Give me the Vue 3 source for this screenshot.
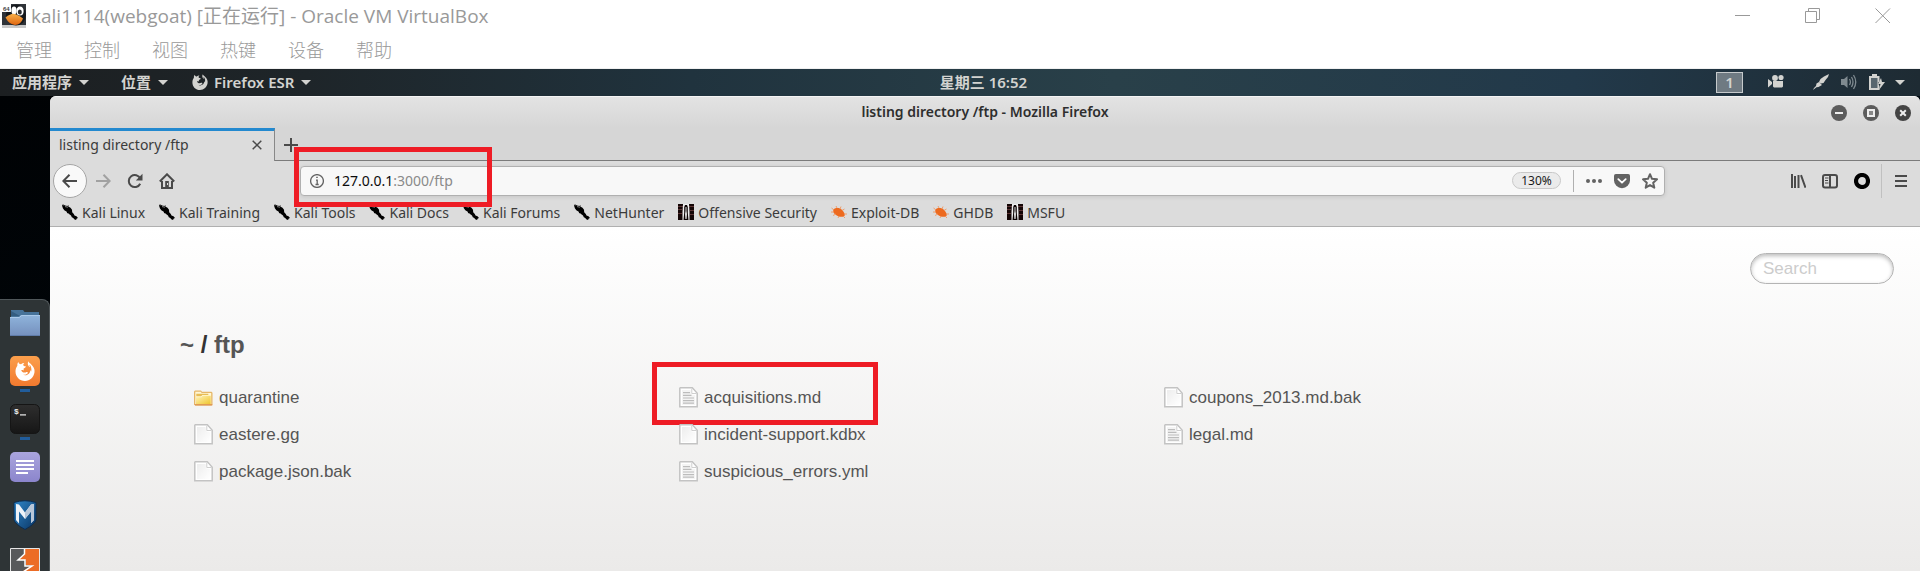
<script setup>
const menus = ['管理', '控制', '视图', '热键', '设备', '帮助']
const bookmarks = [
  { name: 'Kali Linux', icon: 'kali' },
  { name: 'Kali Training', icon: 'kali' },
  { name: 'Kali Tools', icon: 'kali' },
  { name: 'Kali Docs', icon: 'kali' },
  { name: 'Kali Forums', icon: 'kali' },
  { name: 'NetHunter', icon: 'kali' },
  { name: 'Offensive Security', icon: 'offsec' },
  { name: 'Exploit-DB', icon: 'bug' },
  { name: 'GHDB', icon: 'bug' },
  { name: 'MSFU', icon: 'offsec' }
]
const files = [
  { name: 'quarantine', icon: 'dir' },
  { name: 'acquisitions.md', icon: 'text', marked: true },
  { name: 'coupons_2013.md.bak', icon: 'page' },
  { name: 'eastere.gg', icon: 'page' },
  { name: 'incident-support.kdbx', icon: 'page' },
  { name: 'legal.md', icon: 'text' },
  { name: 'package.json.bak', icon: 'page' },
  { name: 'suspicious_errors.yml', icon: 'text' }
]
const dock = [
  { name: 'Files', icon: 'd-files' },
  { name: 'Firefox', icon: 'd-firefox', running: true },
  { name: 'Terminal', icon: 'd-term', running: true },
  { name: 'Text Editor', icon: 'd-notes' },
  { name: 'Metasploit', icon: 'd-msf' },
  { name: 'Burp Suite', icon: 'd-burp' }
]
</script>

<template>
  <div class="screen">
    <svg class="defs" width="0" height="0" aria-hidden="true">
      <defs>
        <linearGradient id="gFolder" x1="0" y1="0" x2="0" y2="1"><stop offset="0" stop-color="#8fb4dc" /><stop offset="1" stop-color="#7590bd" /></linearGradient>
        <linearGradient id="gFox" x1="0" y1="0" x2="0" y2="1"><stop offset="0" stop-color="#fb9f4c" /><stop offset="1" stop-color="#f27a2f" /></linearGradient>
        <linearGradient id="gTerm" x1="0" y1="0" x2="0" y2="1"><stop offset="0" stop-color="#2e2e2e" /><stop offset="1" stop-color="#161616" /></linearGradient>
        <linearGradient id="gNote" x1="0" y1="0" x2="0" y2="1"><stop offset="0" stop-color="#aaa5de" /><stop offset="1" stop-color="#8b85cc" /></linearGradient>
        <linearGradient id="gMsf" x1="0" y1="0" x2="1" y2="1"><stop offset="0" stop-color="#2f86c9" /><stop offset="1" stop-color="#0a3564" /></linearGradient>
        <linearGradient id="gPage" x1="0" y1="0" x2="1" y2="1"><stop offset="0" stop-color="#ededed" /><stop offset="1" stop-color="#ffffff" /></linearGradient>
        <linearGradient id="gDir" x1="0" y1="0" x2="1" y2="1"><stop offset="0" stop-color="#fff3b8" /><stop offset="1" stop-color="#efc52e" /></linearGradient>
        <linearGradient id="gBeak" x1="0" y1="0" x2="0" y2="1"><stop offset="0" stop-color="#f9b04a" /><stop offset="1" stop-color="#e0660f" /></linearGradient>
      </defs>
      <symbol id="kali" viewBox="0 0 16 16">
        <path d="M0 .3 1.500 1.800 1.200.2 3 1.600 5.500 2 6.500.8 6.300 2.600 8.500 3.800 10 5.800 10.200 8.200 11.800 10 12.500 11.500 14.500 12.300 16 14 14.800 14.600 14 16 12.200 15.200 11.300 14 9.800 13.300 9 11.500 7 10 6.200 9.200 5.300 9.300 4.500 7.500 2.600 6.500 1 4.500.3 2.500Z" />
        <path stroke="#dcdcdc" stroke-width=".6" d="M3 2.600 6 3.200" />
      </symbol>
      <symbol id="offsec" viewBox="0 0 16 16">
        <path fill="#140606" d="M0 0h16v16H0z" />
        <path fill="#5c3434" d="M0 2h5v1H0zM0 5h4v1H0zM0 9h4v1H0zM11 2h5v1h-5zM12 6h4v1h-4zM12 10h4v1h-4z" />
        <path fill="#eee" d="M5 0h6l.5 8v8H9.800L9 9V3H7v6l-.8 7H4.500V8z" />
        <path fill="#0c0303" d="M6.200 3 7 1h2l.8 2v6l.7 7H5.500l.7-7z" />
        <path fill="#ddd" d="M7.500 3h1v4l.5 3-.4 5H7.400L7 10l.5-3z" />
      </symbol>
      <symbol id="bug" viewBox="0 0 16 16">
        <path fill="#ed6a1f" d="M2.500 5.500C4.500 3.500 9 3.500 11 6c2 2 3.500 4.500 2.500 6-2 1.500-6 1-8.500-1C2.500 9.200 1.500 7.500 2.500 5.500z" />
        <path fill="none" stroke="#f0955f" stroke-width=".9" d="M3 6 .5 4M3 8H0M5 10l-3 1.500M8 12l-1 2M12 12l2 2M13 10h3M11 6.500l2.500-1.500M9 5l1-2.500M6 4 5 2" />
      </symbol>
      <symbol id="fox" viewBox="0 0 16 16">
        <path d="M2.700.8C3 2 3.700 2.500 4.800 2.600c.8-.8 1.600-1.100 2.700-1.100C6.800 2 6.500 2.600 6.700 3.500c.7.700 1.700.5 2 .9.200.7-1.400 1.200-1.900 1.700.2.500.3 1.200-.2 1.500-.4-.4-1.100-.4-1.600-.2.500 1.400 2 2.200 3.500 1.700.8-.3 1.600-.4 1.900.3-.9 1.500-2.700 2-4.200 1.400 2.700 1.700 6.200-.5 6-3.600.5.500.6 1 .6 1.600.8-2.300.2-4.500-1.200-6-.1.900.1 1.500.5 2.200C10.600 4 9.600 2.500 10.800.2c.3 1.200 1.200 1.500 2.200 2.500C14.800 4.300 16 6.500 15.600 9 15 13 12 16 8 16 3.700 16 .4 12.600.4 8.400.4 6.500 1 5 1.900 3.800 1.800 2.700 2 1.600 2.700.8z" />
      </symbol>
      <symbol id="dir" viewBox="0 0 19 21">
        <path fill="#e6b667" d="M0 4.500 1 3.500h6l1 1.200h9.500l1 1V17.500l-1 1H1.200l-1.200-1z" />
        <path fill="#fff7d6" d="M1.300 4.800h5.400l1 1.200h9.500v11H1.300z" />
        <path fill="#e8bd55" d="M2.300 6.800h12v1.300H8.400L7.200 9.300H2.300z" />
        <path fill="url(#gDir)" d="M2 10.200h5.400l1.300-1.400h8V17H2z" />
        <path fill="#e09a55" d="M.3 17h18v1.600H1.200z" />
      </symbol>
      <symbol id="page" viewBox="0 0 19 21">
        <path fill="#fff" stroke="#c3c3c3" stroke-width="1.500" d="M.8 1.300.8 19.700 18.200 19.700V6.300L13.300.8H1.300z" />
        <path fill="url(#gPage)" d="M3 3h8.500l1 4.500 3.700.8V18H3z" />
        <path fill="#fff" stroke="#cfcfcf" d="M12.800 1.800v4.700h4.400" />
      </symbol>
      <symbol id="text" viewBox="0 0 19 21">
        <path fill="#fff" stroke="#c3c3c3" stroke-width="1.500" d="M.8 1.300.8 19.700 18.200 19.700V6.300L13.300.8H1.300z" />
        <path fill="#f4f4f4" d="M3 3h8.500l1 4.500 3.700.8V18H3z" />
        <path stroke="#bcbcbc" stroke-width="1.200" d="M4 5.700h7M4 8.300h8.500M4 11h11M4 13.600h11M4 16.200h11" />
        <path fill="#fff" stroke="#cfcfcf" d="M12.800 1.800v4.700h4.400" />
      </symbol>
      <symbol id="d-files" viewBox="0 0 30 30">
        <path fill="#47739a" d="M1 2h12l1.500 2H29v6H1z" />
        <path fill="#335c80" d="M1 3l9 5H1z" />
        <path fill="url(#gFolder)" d="M0 9h9l2-2h19v21H0z" />
        <path stroke="#a9c9ea" d="M0 9.500h9.500l2-2H30" fill="none" />
        <path stroke="#5f7ba8" d="M0 27.500h30" />
      </symbol>
      <symbol id="d-firefox" viewBox="0 0 30 30">
        <rect width="30" height="30" rx="5" fill="url(#gFox)" />
        <use href="#fox" x="5" y="5" width="20" height="20" fill="#fff" />
      </symbol>
      <symbol id="d-term" viewBox="0 0 30 30">
        <rect x=".5" y=".5" width="29" height="29" rx="5" fill="url(#gTerm)" stroke="#151515" />
        <text x="4" y="10" class="prompt">$</text>
        <path fill="#eee" d="M10 10.300h6v1.200h-6z" />
      </symbol>
      <symbol id="d-notes" viewBox="0 0 30 30">
        <rect width="30" height="30" rx="5" fill="url(#gNote)" />
        <path stroke="#fff" stroke-width="2" d="M6 9h18M6 13h18M6 17h18M6 21h12" />
      </symbol>
      <symbol id="d-msf" viewBox="0 0 30 30">
        <path fill="url(#gMsf)" stroke="#0c2c50" d="M4 2.500Q15-1 26 2.500V20q-1 4-11 9.500Q5 24 4 20z" />
        <path fill="#eef2f8" d="M6 4l3 .5 6 8 6-8 3-.5v16l-3 3V11.500L15 19 9 11.500v12L6 20z" />
        <path fill="#b8c6d8" d="M15 12.500l6-8 3-.5v16l-3 3V11.500L15 19z" />
      </symbol>
      <symbol id="d-burp" viewBox="0 0 30 30">
        <path fill="#58595b" stroke="#e5e5e5" d="M.5.5h29v29H.5z" />
        <path fill="#ec6c25" d="M15 1h14v28H15l-2-6 9-6h-6v-5H8l7-6z" />
        <path fill="none" stroke="#fff" stroke-width="1.500" d="M14.500 1v5L8 12h7v6h7l-9 6v5" />
      </symbol>
    </svg>

    <header class="host">
      <div class="host-title">
        <svg class="vm-icon" viewBox="0 0 24 24" aria-hidden="true">
          <path fill="#2f3338" d="M0 0h24v24H0z" />
          <path fill="#c9c9c9" d="M0 21h24v3H0z" />
          <ellipse cx="14" cy="11" rx="10" ry="10.500" fill="#15181c" />
          <ellipse cx="12" cy="6.500" rx="2.600" ry="4" fill="#fff" />
          <ellipse cx="18" cy="7" rx="3.600" ry="4.500" fill="#fff" />
          <ellipse cx="17.800" cy="8" rx="2" ry="2.600" fill="#2a2d31" />
          <path fill="url(#gBeak)" d="M3.500 13.500Q9 9 13 10q5 1.500 8 4.500-2 6-8 6.500-6-.5-9.500-7.500z" />
          <path fill="#fff" d="M0 0h9v8H0z" />
          <text x="1" y="7" class="bits">64</text>
        </svg>
        <h1>kali1114(webgoat) [正在运行] - Oracle VM VirtualBox</h1>
        <div class="host-controls">
          <button aria-label="最小化"><svg viewBox="0 0 16 16"><path d="M0 7.500h15" /></svg></button>
          <button aria-label="还原"><svg viewBox="0 0 16 16"><path d="M.5 3.500h11v11H.5zM3.500 3.500v-3h11v11h-3" /></svg></button>
          <button aria-label="关闭"><svg viewBox="0 0 16 16"><path d="M.5.5l14.500 14.500M15 .5.5 15" /></svg></button>
        </div>
      </div>
      <nav class="host-menu">
        <button v-for="m in menus" :key="m">{{ m }}</button>
      </nav>
    </header>

    <div class="panel">
      <nav class="panel-left">
        <button>应用程序<i class="caret"></i></button>
        <button>位置<i class="caret"></i></button>
        <button class="app"><svg class="i16"><use href="#fox" /></svg>Firefox ESR<i class="caret"></i></button>
      </nav>
      <time class="clock">星期三 16:52</time>
      <div class="panel-right">
        <button class="workspace">1</button>
        <svg class="i16 cam" viewBox="0 0 16 16"><circle cx="7" cy="4" r="2.900" /><circle cx="13" cy="3.500" r="2.600" /><path d="M0 5l4 3v2l-4 3.500zM5 7h10v5.500l-1 1H6l-1-1z" /></svg>
        <svg class="i16 plug" viewBox="0 0 16 16"><path d="M16 0l-1 3-2.500 3-2 3L8 9.500 6 8l1.500-3L11 2.500zM9 11l-3.500 2-2 .3L0 16l1-2 2-2 .5-2.500L6 8z" /></svg>
        <svg class="i16 sound" viewBox="0 0 16 16"><path d="M0 5h3l3.500-3v12L3 11H0z" /><path class="wave" d="M8.500 5q1.800 3 0 6M10.500 3q3 5 0 10M12.500 1q4.500 7 0 14" /></svg>
        <svg class="i16 battery" viewBox="0 0 16 16"><path d="M3 0h5v2h2.500v5l-1.500 2 1.500 3v4H0V2h3z" /><path fill="#58666e" d="M2 4h6.500v10H2z" /><path d="M12 4l-3 6h2.500L10 16l6-8h-3z" /></svg>
        <i class="caret"></i>
      </div>
    </div>

    <div class="desktop">
      <nav class="dock">
        <a v-for="d in dock" :key="d.name" href="#" :aria-label="d.name" :class="{ running: d.running }">
          <svg><use :href="'#' + d.icon" /></svg>
        </a>
      </nav>

      <section class="window">
        <div class="titlebar">
          <h2>listing directory /ftp - Mozilla Firefox</h2>
          <div class="win-controls">
            <button aria-label="Minimize"><svg viewBox="0 0 16 16"><circle cx="8" cy="8" r="8" /><path d="M4 8h8" /></svg></button>
            <button aria-label="Maximize"><svg viewBox="0 0 16 16"><circle cx="8" cy="8" r="8" /><path fill="#888" d="M5 5h6v6H5z" /></svg></button>
            <button aria-label="Close"><svg viewBox="0 0 16 16"><circle class="dark" cx="8" cy="8" r="8" /><path d="M5.200 5.200l5.600 5.600M10.800 5.200l-5.600 5.600" /></svg></button>
          </div>
        </div>

        <div class="tabs">
          <div class="tab">
            <span>listing directory /ftp</span>
            <button aria-label="Close tab"><svg viewBox="0 0 10 10"><path d="M.7.700l8.600 8.600M9.300.7.700 9.300" /></svg></button>
          </div>
          <button class="newtab" aria-label="New tab"><svg viewBox="0 0 14 14"><path d="M7 0v14M0 7h14" /></svg></button>
        </div>

        <div class="toolbar">
          <button class="back" aria-label="Back"><svg class="i16" viewBox="0 0 16 16"><path class="ln" d="M15 8H1.500M7.500 1.800 1.300 8l6.200 6.200" /></svg></button>
          <button class="tool dim" aria-label="Forward"><svg class="i16" viewBox="0 0 16 16"><path class="ln" d="M1 8h13.500M8.500 1.800 14.700 8l-6.200 6.200" /></svg></button>
          <button class="tool" aria-label="Reload"><svg class="i16" viewBox="0 0 16 16"><path class="ln" d="M13.200 10.700a6 6 0 1 1 .1-5" /><path class="fl" d="M15.500.8v6.700H8.800z" /></svg></button>
          <button class="tool" aria-label="Home"><svg class="i16" viewBox="0 0 16 16"><path class="ln" d="M.8 8.500 8 1.300l7.200 7.200" /><path class="ln" d="M3 8v7h10V8" /><path class="fl" d="M6.200 8h3.600v7H6.200z" /><path fill="#ddd" d="M8 10h1v2H8z" /></svg></button>

          <div class="urlbox">
            <label class="url" for="address">
              <svg class="info" viewBox="0 0 14 14"><circle cx="7" cy="7" r="6.400" /><path d="M6 6.200h1.200v4.300M5.500 10.500h3.200" /><path d="M6.200 3.300h1.600" /></svg>
              <span class="host-part">127.0.0.1</span><span class="rest">:3000/ftp</span>
            </label>
            <input id="address" type="text" aria-label="Address" />
            <button class="zoom">130%</button>
            <i class="vsep"></i>
            <svg class="i16" viewBox="0 0 16 16"><circle cx="2" cy="8" r="2" /><circle cx="8" cy="8" r="2" /><circle cx="14" cy="8" r="2" /></svg>
            <svg class="i16" viewBox="0 0 16 16"><path d="M1.800 1h12.400Q16 1 16 2.800v4.400a8 8 0 0 1-16 0V2.800Q0 1 1.800 1z" /><path fill="none" stroke="#fff" stroke-width="1.800" stroke-linecap="round" stroke-linejoin="round" d="M4.300 6.200 8 9.700l3.700-3.500" /></svg>
            <svg class="i16" viewBox="0 0 16 16"><path class="ln" stroke-linejoin="round" d="M8 1.200l2 4.600 5 .5-3.800 3.400 1.100 5L8 12.100l-4.300 2.600 1.100-5L1 6.300l5-.5z" /></svg>
          </div>

          <div class="tool-right">
            <svg class="i16" viewBox="0 0 16 16"><path class="ln" d="M2 1v14M5 3v12M8.500 2v13M11 2.200l4.500 12.500" /></svg>
            <svg class="i16" viewBox="0 0 16 16"><rect class="ln" x="1" y="2" width="14" height="12.500" rx="2" /><path class="ln" d="M8 2v12.500" /><path stroke="#4a4a4a" d="M3 5h3.500M3 7.500h3M3 10h3.500" /></svg>
            <svg class="i16" viewBox="0 0 16 16"><circle cx="8" cy="8" r="6" fill="none" stroke="#000" stroke-width="4.200" /></svg>
            <button class="burger" aria-label="Menu"><svg viewBox="0 0 12 12"><path class="ln" d="M0 1h12M0 6h12M0 11h12" /></svg></button>
          </div>
        </div>

        <nav class="bookmarks">
          <a v-for="b in bookmarks" :key="b.name" href="#"><svg class="i16"><use :href="'#' + b.icon" /></svg>{{ b.name }}</a>
        </nav>

        <main class="page">
          <input class="search" type="text" placeholder="Search" aria-label="Search" />
          <h3><a href="#">~</a> / <a href="#">ftp</a></h3>
          <ul class="files">
            <li v-for="f in files" :key="f.name">
              <a href="#"><svg><use :href="'#' + f.icon" /></svg>{{ f.name }}</a>
              <i v-if="f.marked" class="mark"></i>
            </li>
          </ul>
        </main>
        <i class="mark mark-url"></i>
      </section>
    </div>
  </div>
</template>

<style>
body {
  margin: 0;
  overflow: hidden;
}
</style>

<style scoped>
* {
  box-sizing: border-box;
}
button {
  border: 0;
  padding: 0;
  background: none;
  font: inherit;
  color: inherit;
}
a {
  color: inherit;
  text-decoration: none;
}
svg {
  display: block;
  flex: none;
}
h1, h2, h3, ul {
  margin: 0;
  padding: 0;
  font-size: inherit;
}
.defs {
  position: absolute;
}
.screen {
  display: flex;
  flex-direction: column;
  height: 100vh;
  overflow: hidden;
  background: #fff;
  font-family: "Noto Sans", "Noto Sans CJK SC", sans-serif;
}
.i16 {
  width: 16px;
  height: 16px;
}

.host {
  color: #999;
  border-bottom: 1px solid #f0f0f0;
}
.host-title {
  display: flex;
  align-items: center;
  height: 32px;
  padding: 0 29px 0 2px;
}
.vm-icon {
  width: 24px;
  height: 24px;
  overflow: visible;
}
.bits {
  font: bold 6px "Liberation Sans", sans-serif;
  fill: #444;
}
.host-title h1 {
  flex: 1;
  margin-left: 5px;
  font: 400 19px/30px "Open Sans", "Noto Sans CJK SC", sans-serif;
}
.host-controls {
  display: flex;
  gap: 54px;
}
.host-controls svg {
  width: 16px;
  height: 16px;
  fill: none;
  stroke: #999;
}
.host-menu {
  display: flex;
  gap: 32px;
  height: 36px;
  padding: 0 0 2px 16px;
  font: 300 18px "Noto Sans CJK SC", sans-serif;
}

.panel {
  display: grid;
  grid-template-columns: 1fr auto 1fr;
  align-items: center;
  flex: none;
  height: 27px;
  padding: 0 15px 1px 12px;
  background: linear-gradient(90deg, #1c1f21 0, #1e2529 16%, #20333e 36%, #294049 58%, #22394a 82%, #1e2b33 100%);
  color: #d3d3d0;
  fill: #d3d3d0;
  font-size: 15px;
  font-weight: 600;
  line-height: 24px;
}
.panel-left, .panel-right, .panel-left button {
  display: flex;
  align-items: center;
}
.panel-left {
  gap: 32px;
}
.panel-left .app {
  margin-left: -8px;
}
.app .i16 {
  margin-right: 6px;
}
.caret {
  width: 0;
  margin-left: 7px;
  border: 5px solid transparent;
  border-top-color: #d3d3d0;
  border-bottom: 0;
}
.clock {
  padding-left: 50px;
}
.panel-right {
  justify-content: flex-end;
}
.workspace {
  width: 27px;
  height: 21px;
  border: 1px solid #c6cacc;
  background: #6f7a82;
  line-height: 18px;
}
.cam {
  margin-left: 25px;
}
.plug {
  margin-left: 29px;
}
.sound, .battery {
  margin-left: 12px;
}
.sound {
  fill: #7f8a90;
}
.wave {
  fill: none;
  stroke: #7f8a90;
  stroke-width: 1.300;
}
.panel-right .caret {
  margin-left: 10px;
}

.desktop {
  display: flex;
  flex: 1;
  min-height: 0;
  background: linear-gradient(160deg, #000204 0, #01060a 30%, #020b13 60%, #0d2d45 100%);
}
.dock {
  display: flex;
  flex-direction: column;
  align-items: center;
  gap: 18px;
  flex: none;
  width: 50px;
  margin-top: 203px;
  padding-top: 8px;
  border: solid #50575a;
  border-width: 1px 1px 0 0;
  border-radius: 0 8px 0 0;
  background: #2e3436;
}
.dock a {
  position: relative;
}
.dock svg {
  width: 30px;
  height: 30px;
}
.running::after {
  content: "";
  position: absolute;
  left: 10px;
  bottom: -6px;
  width: 10px;
  height: 3px;
  background: #215d9c;
}
.prompt {
  font: bold 8px "Liberation Mono", monospace;
  fill: #eee;
}

.window {
  position: relative;
  display: flex;
  flex: 1;
  flex-direction: column;
  min-width: 0;
  border-radius: 6px 6px 0 0;
  overflow: hidden;
  background: #dcdcdc;
  color: #3b3b3b;
}
.titlebar {
  display: grid;
  grid-template-columns: 1fr auto 1fr;
  align-items: center;
  height: 32px;
  padding: 0 9px;
  border-top: 1px solid #f4f4f4;
  background: linear-gradient(#e3e3e3, #d6d6d6);
}
.titlebar h2 {
  grid-column: 2;
  padding-bottom: 2px;
  font-size: 14px;
  font-weight: 600;
  color: #2e2e2e;
}
.win-controls {
  display: flex;
  justify-content: flex-end;
  gap: 16px;
}
.win-controls svg {
  width: 16px;
  height: 16px;
  fill: #5c5c5c;
  stroke: #eee;
  stroke-width: 2;
}
.win-controls circle {
  stroke: none;
}
.win-controls .dark {
  fill: #444;
}

.tabs {
  display: flex;
  height: 33px;
  background: linear-gradient(#7b7b7b, #7b7b7b) bottom / 100% 1px no-repeat #d6d6d6;
  font-size: 14px;
}
.tab {
  display: flex;
  align-items: center;
  justify-content: space-between;
  width: 225px;
  padding: 0 12px 3px 9px;
  border-top: 3px solid #2389cf;
  border-right: 1px solid #888;
  background: #dcdcdc;
}
.tab svg {
  width: 10px;
  height: 10px;
  stroke: #4a4a4a;
  stroke-width: 1.500;
}
.newtab {
  margin-left: 9px;
}
.newtab svg {
  width: 14px;
  height: 14px;
  stroke: #4a4a4a;
  stroke-width: 2;
}

.toolbar {
  display: flex;
  align-items: center;
  height: 39px;
  padding: 0 13px 0 3px;
}
.ln {
  fill: none;
  stroke: #4a4a4a;
  stroke-width: 2;
}
.fl {
  fill: #4a4a4a;
}
.back {
  display: grid;
  place-items: center;
  width: 34px;
  height: 34px;
  border: 1px solid #a5a5a5;
  border-radius: 50%;
  background: #f9f9f9;
}
.tool {
  margin: 0 8px;
}
.dim {
  opacity: .4;
}
.urlbox {
  display: flex;
  align-items: center;
  gap: 12px;
  flex: 1;
  height: 30px;
  margin-left: 117px;
  padding: 0 6px 0 9px;
  border: 1px solid #b0b0b0;
  border-radius: 4px;
  background: #f8f8f8;
  box-shadow: 0 1px 4px rgba(0, 0, 0, .1);
  fill: #636363;
}
.urlbox .ln {
  stroke: #636363;
}
.url {
  display: flex;
  align-items: center;
  font-size: 14px;
}
.info {
  width: 14px;
  height: 14px;
  margin-right: 10px;
  fill: none;
  stroke: #636363;
  stroke-width: 1.300;
}
.host-part {
  color: #0c0c0c;
}
.rest {
  color: #8a8a8a;
}
.urlbox input {
  flex: 1;
  min-width: 0;
  border: 0;
  background: none;
  outline: 0;
}
.zoom {
  width: 49px;
  height: 17px;
  border: 1px solid #c8c8c8;
  border-radius: 9px;
  background: #ebebeb;
  color: #1a1a1a;
  font-size: 12px;
  line-height: 15px;
}
.vsep {
  width: 1px;
  height: 22px;
  background: #b0b0b0;
}
.tool-right {
  display: flex;
  align-items: center;
  gap: 16px;
  margin-left: 125px;
}
.burger {
  display: grid;
  align-items: center;
  height: 34px;
  margin-left: -5px;
  padding-left: 13px;
  border-left: 1px solid #c0c0c0;
}
.burger svg {
  width: 12px;
  height: 12px;
}

.bookmarks {
  display: flex;
  align-items: center;
  gap: 14px;
  height: 27px;
  padding: 0 12px 2px;
  border-bottom: 1px solid #b0b0b0;
  font-size: 14px;
  white-space: nowrap;
}
.bookmarks a {
  display: flex;
  align-items: center;
  gap: 4px;
}

.page {
  display: flex;
  flex: 1;
  flex-direction: column;
  padding: 26px 130px 0;
  background: linear-gradient(#fff, #ebeae9);
  color: #555;
  font-family: "Liberation Sans", Arial, sans-serif;
}
.search {
  align-self: flex-end;
  width: 144px;
  height: 31px;
  margin-right: -104px;
  padding: 0 12px;
  border: 1px solid #b4b4b4;
  border-radius: 16px;
  background: #fff;
  box-shadow: inset 0 2px 4px #bbb;
  font: 17px "Liberation Sans", Arial, sans-serif;
}
.search::placeholder {
  color: #ccc;
  opacity: 1;
}
.page h3 {
  margin-top: 47px;
  color: #333;
  font-size: 24px;
  line-height: 28px;
}
.page h3 a {
  color: #555;
}
.files {
  display: grid;
  grid-template-columns: repeat(3, 30%);
  gap: 0 2px;
  margin-top: 20px;
  list-style: none;
  font-size: 17px;
}
.files li {
  position: relative;
  padding-left: 14px;
}
.files a {
  display: flex;
  align-items: center;
  gap: 6px;
  height: 37px;
}
.files svg {
  width: 19px;
  height: 21px;
}
.mark {
  position: absolute;
  top: -17px;
  left: -13px;
  width: 226px;
  height: 63px;
  border: 5px solid #ee1c25;
}
.mark-url {
  top: 51px;
  left: 244px;
  width: 198px;
  height: 60px;
}
</style>
